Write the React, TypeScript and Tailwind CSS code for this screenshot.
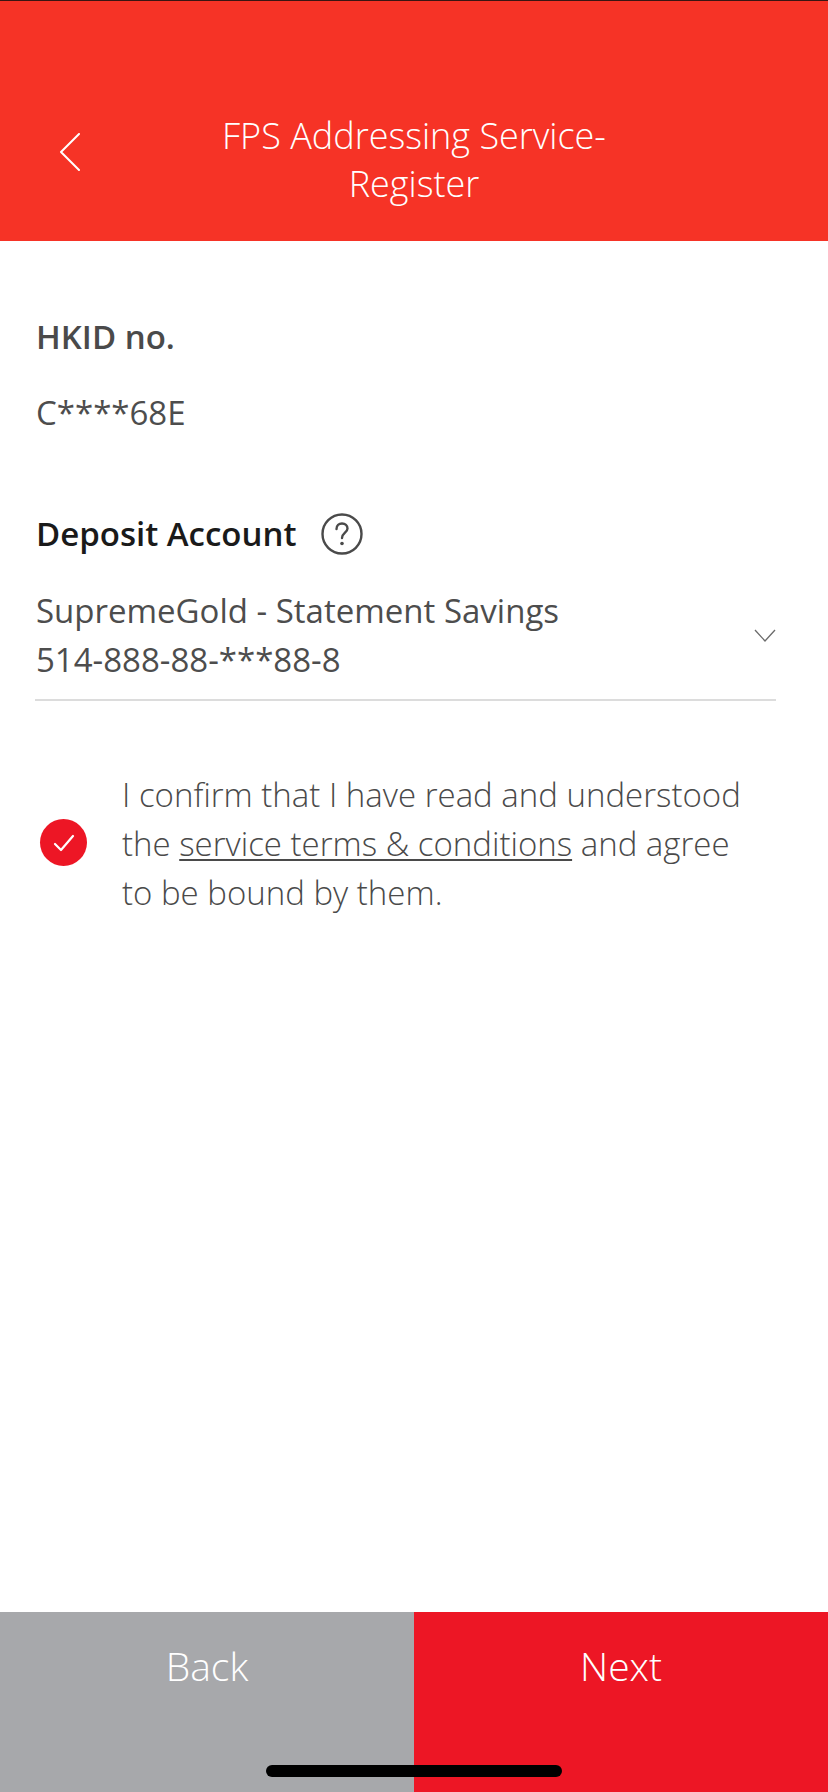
const font = { fontFamily: '"Open Sans", sans-serif' };

export default function App() {
  return (
    <div
      className="h-[1792px] w-[828px] flex flex-col bg-white text-[#4a4a4a] relative overflow-hidden"
      style={font}
    >
      {/* Header */}
      <header className="h-[241px] shrink-0 bg-[#f63326] border-t border-[#3a1512] relative flex items-end justify-center pb-[33px]">
        <svg
          className="absolute left-[59px] top-[132px]"
          width="22"
          height="38"
          viewBox="0 0 22 38"
          fill="none"
          stroke="white"
          strokeWidth="2"
          strokeLinecap="round"
          strokeLinejoin="round"
        >
          <path d="M20 1 L2 19 L20 37" />
        </svg>
        <h1 className="w-[480px] text-center text-[36px] leading-[48px] font-light text-white">
          FPS Addressing Service-
          <br />
          Register
        </h1>
      </header>

      {/* Form */}
      <main className="flex-1 px-[36px] pt-[72px]">
        <div className="text-[33px] leading-[48px] font-semibold text-[#4a4a4a]">HKID no.</div>
        <div className="mt-[28px] text-[33px] leading-[48px] text-[#4d4d4d]">C****68E</div>

        <div className="mt-[73px] flex items-center h-[48px]">
          <span className="text-[33px] leading-[48px] font-semibold text-[#1a1a1a]">Deposit Account</span>
          <svg className="ml-[24px]" width="42" height="42" viewBox="0 0 42 42" fill="none">
            <circle cx="21" cy="21" r="19.5" stroke="#4a4a4a" strokeWidth="2.4" />
            <path
              d="M15.5 16 C15.5 12.5 18 10.5 21 10.5 C24.2 10.5 26.5 12.5 26.5 15.5 C26.5 19.5 21 20 21 25"
              stroke="#4a4a4a"
              strokeWidth="2.4"
              strokeLinecap="round"
            />
            <circle cx="21" cy="30.5" r="1.8" fill="#4a4a4a" />
          </svg>
        </div>

        <div className="mt-[28px] -ml-px pl-px w-[740px] h-[113px] border-b-2 border-[#dcdcdc] box-content flex justify-between">
          <div className="text-[33px] leading-[49px] text-[#4d4d4d]">
            SupremeGold - Statement Savings
            <br />
            514-888-88-***88-8
          </div>
          <svg className="mt-[43px]" width="22" height="14" viewBox="0 0 22 14" fill="none" stroke="#6b6b6b" strokeWidth="1.3">
            <path d="M1 1 L11 12 L21 1" />
          </svg>
        </div>

        <div className="mt-[69px] flex items-center">
          <div className="ml-[4px] -mt-[2px] w-[47px] h-[47px] rounded-full bg-[#ed1625] flex items-center justify-center shrink-0">
            <svg width="22" height="18" viewBox="0 0 22 18" fill="none" stroke="white" strokeWidth="2.2" strokeLinecap="round" strokeLinejoin="round">
              <path d="M2 10 L8 16 L20 2" />
            </svg>
          </div>
          <p className="ml-[35px] text-[33px] leading-[49px] font-light text-[#4a4a4a] whitespace-nowrap">
            I confirm that I have read and understood
            <br />
            the <span className="underline decoration-[1.5px] underline-offset-[3px]">service terms &amp; conditions</span> and agree
            <br />
            to be bound by them.
          </p>
        </div>
      </main>

      {/* Bottom buttons */}
      <footer className="h-[180px] shrink-0 flex text-[39px] font-light text-white">
        <button className="w-[414px] bg-[#a7a8ab] flex justify-center pt-[29px] leading-[50px]">Back</button>
        <button className="w-[414px] bg-[#ed1625] flex justify-center pt-[29px] leading-[50px]">Next</button>
      </footer>

      {/* Home indicator */}
      <div className="absolute left-[266px] top-[1765px] w-[296px] h-[12px] rounded-full bg-black" />
    </div>
  );
}
